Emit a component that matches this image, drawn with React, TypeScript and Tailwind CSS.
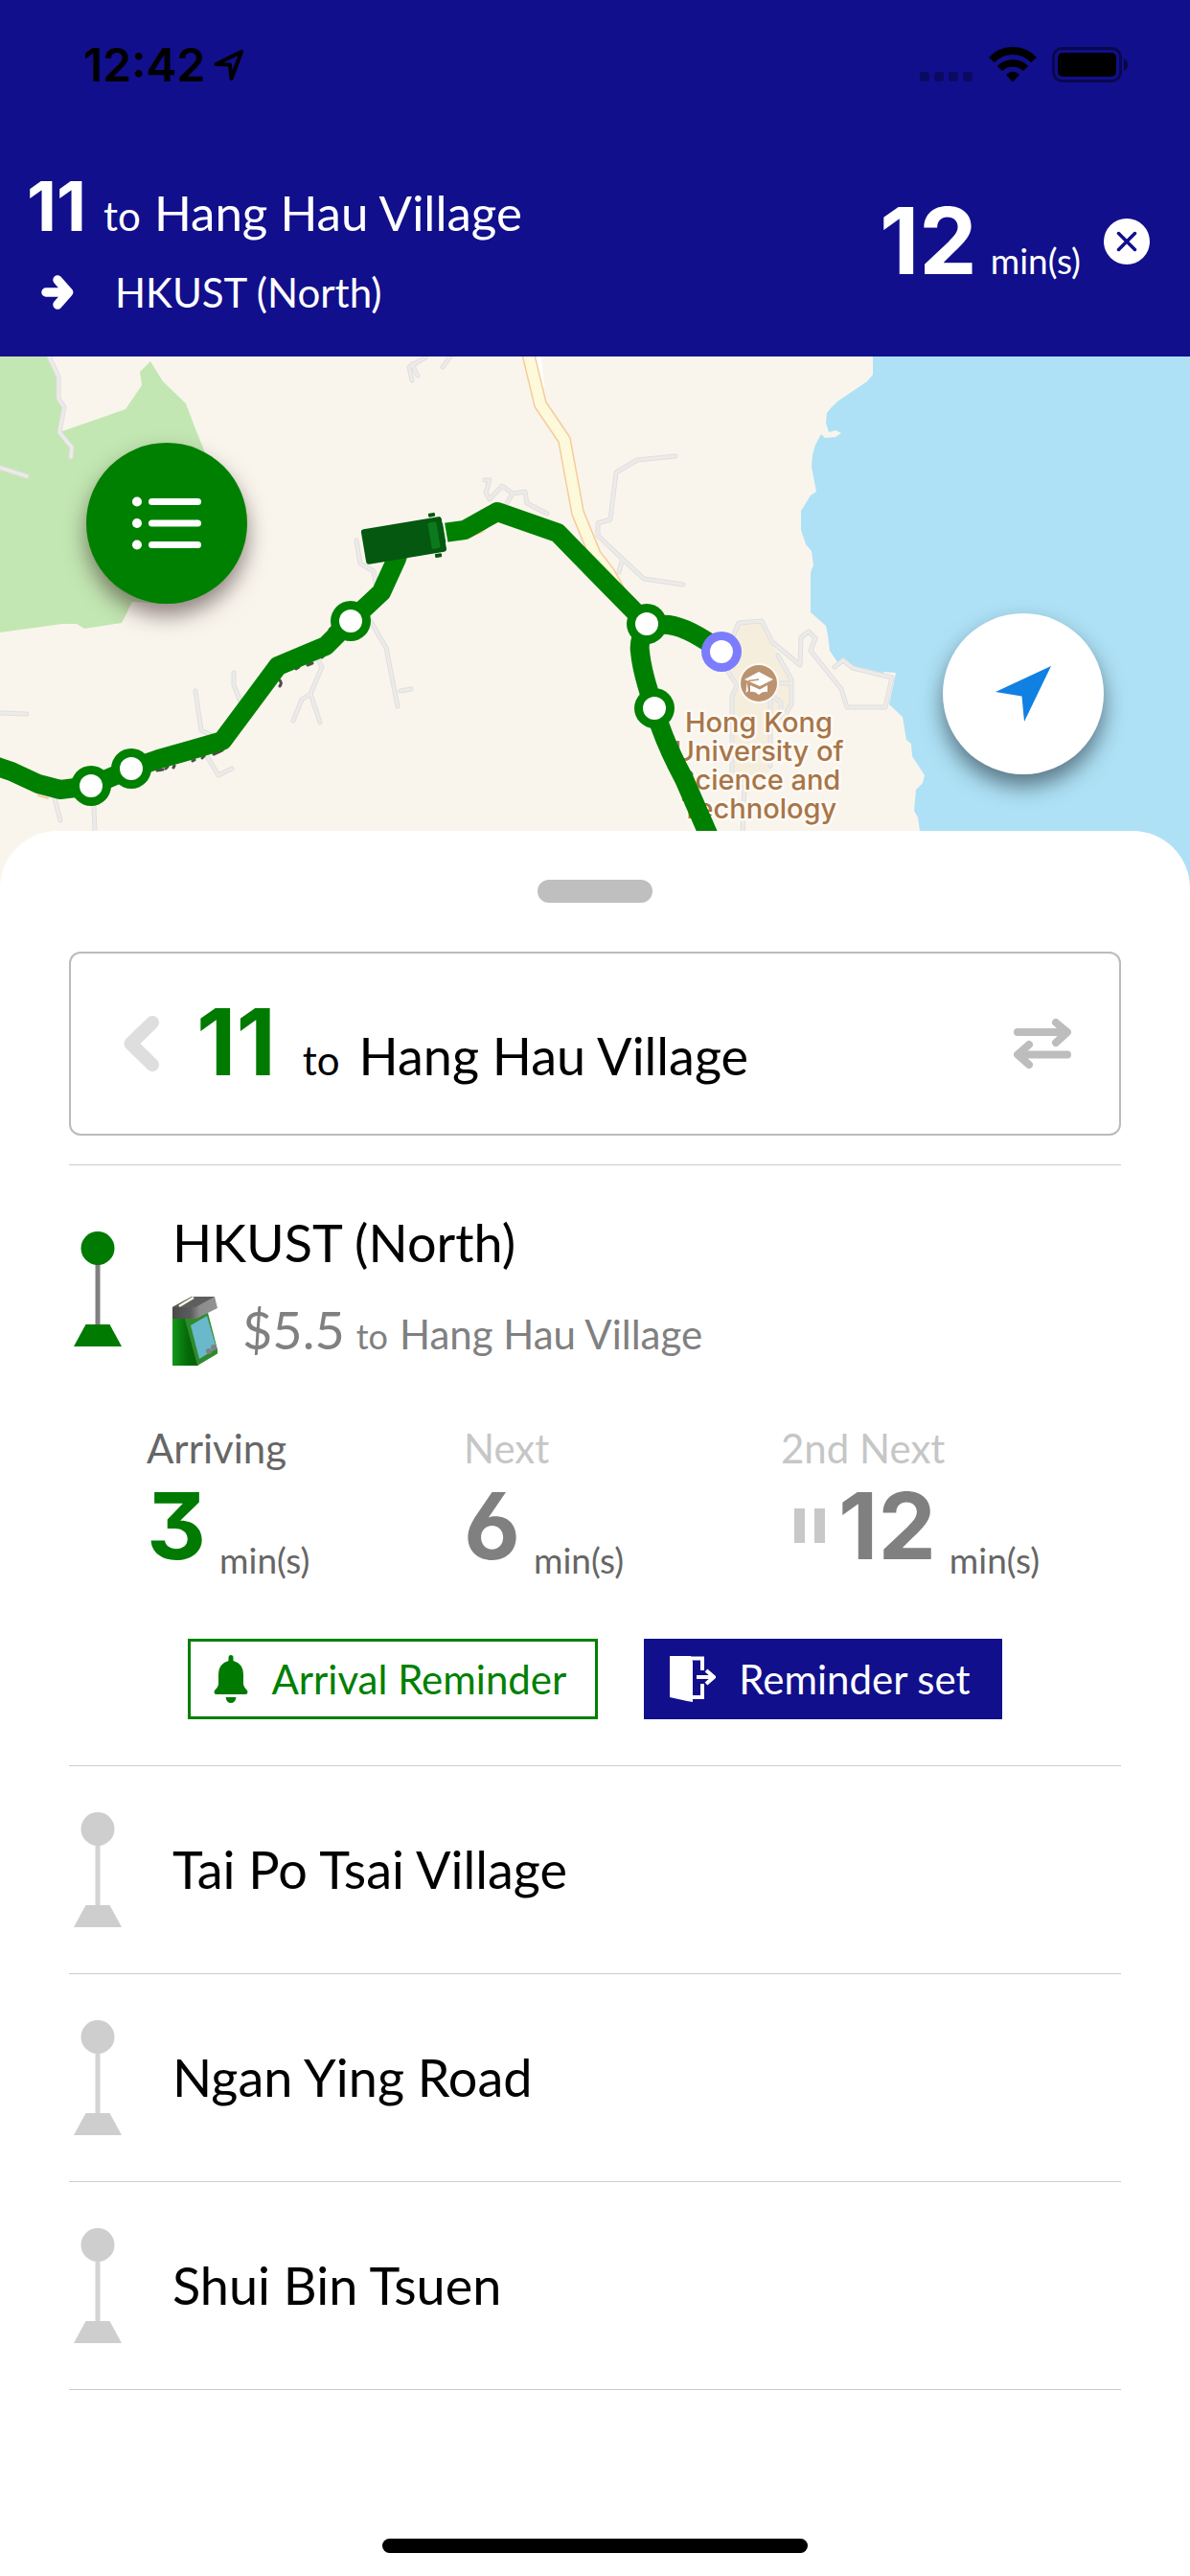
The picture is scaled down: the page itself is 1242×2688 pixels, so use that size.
import React from "react";

const NUM = "font-['Inter',sans-serif] font-bold [font-feature-settings:'cv09','cv03']";

function LocationArrow() {
  return (
    <svg viewBox="0 0 32 34" className="h-[34px] w-8" fill="none" stroke="black" strokeWidth="4" strokeLinejoin="round" aria-hidden="true">
      <path d="M29 3 2.500 16 17 16.500 18.500 31Z" />
    </svg>
  );
}

function StatusBar() {
  return (
    <div className="flex h-33 items-center justify-between pt-1 pr-16 pl-[87px] text-black">
      <div className="flex items-center gap-[9px]">
        <span className="font-['Inter',sans-serif] text-[48px] leading-none font-semibold">12:42</span>
        <LocationArrow />
      </div>
      <svg viewBox="0 0 218 38" className="h-[38px] w-[218px]" role="img" aria-label="Wi-Fi and battery">
        <g opacity="0.3">
          <rect x="0" y="26" width="10" height="10" rx="3" />
          <rect x="15" y="26" width="10" height="10" rx="3" />
          <rect x="30" y="26" width="10" height="10" rx="3" />
          <rect x="45" y="26" width="10" height="10" rx="3" />
        </g>
        <g fill="none" stroke="black">
          <path d="M75 13.500C87 .8 107 .8 119 13.500" strokeWidth="8" />
          <path d="M83.500 22.500C90.500 15 103.500 15 110.500 22.500" strokeWidth="7.500" />
        </g>
        <path d="M97 36.500 90 29Q97 22.500 104 29Z" />
        <rect x="139.500" y="1.500" width="70" height="34" rx="9" fill="none" stroke="black" strokeOpacity="0.45" strokeWidth="3" />
        <rect x="144" y="6" width="61" height="25" rx="5" />
        <path d="M213 12Q217 14 217 18.500T213 25Z" fillOpacity="0.5" />
      </svg>
    </div>
  );
}

function TripHeader() {
  return (
    <header className="bg-[#110f8c] text-white">
      <StatusBar />
      <div className="flex h-60 items-center justify-between pr-[42px] pl-7">
        <div className="flex flex-col gap-3.5 pt-2.5">
          <h1 className="flex items-baseline text-[51px] leading-[72px]">
            <span className={`${NUM} text-[72px]`}>11</span>
            <span className="ml-[18px] text-[42px]">to</span>
            <span className="ml-[14px]">Hang Hau Village</span>
          </h1>
          <p className="flex items-center gap-[43px] pl-[15px] text-[42px] leading-[60px]">
            <svg viewBox="0 0 34 36" className="h-9 w-[34px]" fill="none" stroke="white" strokeWidth="9.500" strokeLinecap="round" strokeLinejoin="round" aria-hidden="true">
              <path d="M5 18H27M17 5 28.500 18 17 31" />
            </svg>
            HKUST (North)
          </p>
        </div>
        <div className="flex items-center gap-6">
          <p className="flex items-baseline gap-[14px] pb-0.5">
            <span className={`${NUM} text-[96px] leading-24`}>12</span>
            <span className="text-[37px] leading-12">min(s)</span>
          </p>
          <button type="button" aria-label="Close" className="rounded-full">
            <svg viewBox="0 0 48 48" className="size-12">
              <circle cx="24" cy="24" r="24" fill="white" />
              <path d="M15.500 15.500 32.500 32.500M32.500 15.500 15.500 32.500" stroke="#110f8c" strokeWidth="3.500" strokeLinecap="round" />
            </svg>
          </button>
        </div>
      </div>
    </header>
  );
}

const minorRoads = [
  "M51 0 61 21 61 44 67 53 62 79 75 95 74 105",
  "M0 116 28 125",
  "M444 1 427 11 430 25M430 8 436 20M470 0 462 11",
  "M506 129 511 129 507 142 511 149 524 135 535 143 548 141 550 153 571 164M535 143 529 153",
  "M372 192 376 216 390 224 392 236",
  "M386 275 403 304 415 365M418 349 429 347",
  "M333 318 336 324 324 352 334 382M324 352 315 358 306 380",
  "M244 330 244 343 251 360M204 349 210 390 222 396M216 417 228 437 242 430",
  "M0 372 28 373M57 461 63 484M98 468 99 500",
  "M705 104 665 108 643 121 637 170 624 174 624 187 672 232 713 238M649 214 646 225",
  "M764 294 771 278 795 276 806 298 835 322 836 293 844 287 851 294 846 307 878 347 884 366 924 366 931 335 890 325 880 317 871 324",
  "M812 312 826 337 826 363 817 378M807 341 826 341M807 355 815 361 815 372",
  "M758 326 769 343 764 355 764 434 777 447 775 500M804 355 804 427",
];

const stops = [
  { x: 95, y: 448, color: "#008000" },
  { x: 137, y: 430, color: "#008000" },
  { x: 366, y: 276, color: "#008000" },
  { x: 675, y: 279, color: "#008000" },
  { x: 683, y: 367, color: "#008000" },
  { x: 753, y: 308, color: "#7c7cff" },
];

const campusLabel = ["Hong Kong", "University of", "Science and", "Technology"];

function RouteMap() {
  const roads = minorRoads.join("");
  return (
    <svg viewBox="0 0 1242 560" preserveAspectRatio="xMidYMin slice" className="h-[560px] w-full" role="img" aria-label="Route map">
      <rect width="1242" height="560" fill="#f9f5ed" />
      <path d="M0 0H51L61 21V44L67 53 62 79 131 55 148 30 146 16 157 5 170 26 194 49 203 73 213 98 198 198 174 258 138 256 127 278 88 284 80 279 65 279 0 288Z" fill="#c3e7b3" />
      <path
        d="M911 0V19L905 26 874 47 866 55 863 59 862 69 865 79 872 77 878 80 872 84 861 85 857 81 851 92 848 103 847 115 852 141 846 145 836 161 836 181 841 196 847 203 849 218 846 225V267L862 281 864 291 866 307 874 319 880 317 891 325 922 332 922 329 935 330 928 363 942 376 946 400 951 404 952 417 965 437 963 445 956 452 954 474 958 481 960 495V560H1242V0Z"
        fill="#aee1f5"
      />
      <path d="M771 278 795 276 806 298 813 312 826 337V363L819 377 805 384V430L781 457 766 435 764 355 771 341 758 320Z" fill="#f6eedd" />
      <g fill="none" strokeLinecap="round" strokeLinejoin="round">
        <path d={roads} stroke="#e0dfdd" strokeWidth="5" />
        <path d={roads} stroke="#ecebea" strokeWidth="3" />
        <path d="M562 0 565 30" stroke="white" strokeWidth="6" />
        <path d="M551 -4 564 50 589 87 603 163 621 207 635 225 650 252" stroke="#f7cb9b" strokeWidth="14" />
        <path d="M551 -4 564 50 589 87 603 163 621 207 635 225 650 252" stroke="#fcfadb" strokeWidth="11" />
        <path d="M485 190 503 183 512 174M40 458 50 461" stroke="#f7cb9b" strokeWidth="2" />
      </g>
      <g stroke="#4d4d4d" strokeWidth="3" strokeLinecap="round" fill="none">
        <path d="M164 432 170 431M173 430 175 428M181 429 182 427M201 422 203 421M211 419 213 417M223 415 228 413 232 411M291 337Q295 340 292 344M309 326 312 324M321 322 326 320M336 314 339 311M344 285 347 282" />
      </g>
      <g fill="#a87547" stroke="#fdfaf5" strokeWidth="5" paintOrder="stroke" strokeLinejoin="round" textAnchor="middle" className="font-['Inter',sans-serif] text-[29px] font-medium">
        {campusLabel.map((line, i) => (
          <text key={line} x="792" y={392 + i * 30}>
            {line}
          </text>
        ))}
      </g>
      <circle cx="792" cy="341" r="21" fill="#fdfaf5" />
      <circle cx="792" cy="341" r="19" fill="#bb9370" />
      <path d="M777 337 792 329 807 337 793 344Z" fill="white" />
      <path d="M783 343 793 347.500 801 343V350Q796 349 792 353 788 349 783 350Z" fill="white" />
      <path d="M781 338.500 792 337" stroke="#bb9370" strokeWidth="1.500" fill="none" />
      <path d="M779.500 340 778.500 351 781 349Z" fill="white" />
      <g fill="none" stroke="#008000" strokeWidth="20" strokeLinejoin="round">
        <path d="M-10 425 0 429 12 433 40 446 63 452 95 448 137 430 166 420 198 411 232 401 290 323 340 302 366 276 398 246 414 211 420 192 463 184 485 181 519 162 582 184 621 224 675 279 698 280Q720 283 753 308" />
        <path d="M675 279Q666 297 668 308 670 330 683 367 692 400 714 441L742 505" />
      </g>
      {stops.map((s) => (
        <g key={`${s.x}-${s.y}`}>
          <circle cx={s.x} cy={s.y} r="21" fill={s.color} />
          <circle cx={s.x} cy={s.y} r="12" fill="white" />
        </g>
      ))}
      <g transform="translate(421 192) rotate(-9.500)">
        <rect x="-42" y="-18.500" width="85" height="37" rx="3" fill="#04580f" />
        <path d="M44.500 -14V14" stroke="white" strokeWidth="2" />
        <rect x="28" y="-14" width="9" height="28" rx="2" fill="#0b7a1c" />
        <rect x="30" y="-23.500" width="7" height="4" rx="1" fill="#04580f" />
        <rect x="30" y="19.500" width="7" height="4" rx="1" fill="#04580f" />
      </g>
    </svg>
  );
}

function MapSection() {
  return (
    <section className="relative">
      <RouteMap />
      <button type="button" aria-label="Route list" className="absolute top-[90px] left-[90px] flex size-[168px] items-center justify-center rounded-full bg-[#008000] shadow-[0_12px_22px_rgba(40,20,20,0.5)]">
        <svg viewBox="0 0 72 56" className="h-14 w-18" stroke="white" strokeWidth="7" strokeLinecap="round">
          <path d="M20.500 5.500H68.500M20.500 28H68.500M20.500 50.500H68.500" />
          <g fill="white" stroke="none">
            <circle cx="5" cy="5.500" r="5" />
            <circle cx="5" cy="28" r="5" />
            <circle cx="5" cy="50.500" r="5" />
          </g>
        </svg>
      </button>
      <button type="button" aria-label="My location" className="absolute top-[268px] right-[90px] flex size-[168px] items-center justify-center rounded-full bg-white shadow-[0_12px_22px_rgba(20,30,40,0.55)]">
        <svg viewBox="0 0 58 58" className="size-[58px]" fill="#1080e2">
          <path d="M58 0 0 27 27.500 31.500 30 58Z" />
        </svg>
      </button>
    </section>
  );
}

function StopSign({ active = false }: { active?: boolean }) {
  const main = active ? "#007a00" : "#cecece";
  return (
    <svg viewBox="0 0 50 120" className="h-30 w-[50px] shrink-0" aria-hidden="true">
      <path d="M25 30V100" stroke={active ? "#808080" : "#d3d3d3"} strokeWidth="5" />
      <circle cx="25" cy="17.500" r="17.500" fill={main} />
      <path d="M12.500 97H37.500L50 120H0Z" fill={main} />
    </svg>
  );
}

function FareBox() {
  return (
    <svg viewBox="0 0 47 72" className="h-18 w-[47px]" aria-hidden="true">
      <defs>
        <linearGradient id="side" x1="0" x2="1">
          <stop offset="0" stopColor="#12971a" />
          <stop offset="0.6" stopColor="#046808" />
          <stop offset="1" stopColor="#055f09" />
        </linearGradient>
        <linearGradient id="lid" x1="0" x2="1">
          <stop offset="0" stopColor="#4a4a4a" />
          <stop offset="0.4" stopColor="#5c5c5c" />
          <stop offset="0.6" stopColor="#8c8c8c" />
          <stop offset="1" stopColor="#939393" />
        </linearGradient>
      </defs>
      <path d="M0 20H14L27 72H0Z" fill="url(#side)" />
      <path d="M12 20 37 17 48 59 26 72Z" fill="#2f8a2c" />
      <path d="M19 30 36 20 46 54 28 65Z" fill="#69b9ca" />
      <g fill="#7d8084">
        <circle cx="38" cy="57" r="3" />
        <circle cx="43" cy="53" r="3" />
      </g>
      <path d="M0 11 20 0H44L47 12 25 23H0Z" fill="url(#lid)" />
      <path d="M0 11 20 0H44L24 11Z" fill="#5e5e5e" />
      <path d="M7 10 22 1" stroke="#fffbe6" strokeWidth="2.500" />
    </svg>
  );
}

function Bell() {
  return (
    <svg viewBox="0 0 36 50" className="h-[50px] w-9" fill="#007a00" aria-hidden="true">
      <path d="M18 0Q20.500 0 20.500 3V6Q31 9 31 20V30Q31 33 35 37 36.500 41 33 41H3Q-.5 41 1 37 5 33 5 30V20Q5 9 15.500 6V3Q15.500 0 18 0ZM12.500 44H23.500Q22.500 50 18 50T12.500 44Z" />
    </svg>
  );
}

function ExitDoor() {
  return (
    <svg viewBox="0 0 48 48" className="size-12" aria-hidden="true">
      <path d="M0 0H22L24 6V48L18 47 0 43Z" fill="white" />
      <path d="M20 2.500H34V15M34 29V43H24" fill="none" stroke="white" strokeWidth="4" />
      <path d="M28 22H45M38 15 46 22 38 29" fill="none" stroke="white" strokeWidth="4" />
    </svg>
  );
}

const arrivals = [
  { label: "Arriving", labelColor: "text-[#666666]", minutes: "3", color: "text-[#007a00]", held: false },
  { label: "Next", labelColor: "text-[#c6c6c6]", minutes: "6", color: "text-[#808080]", held: false },
  { label: "2nd Next", labelColor: "text-[#c6c6c6]", minutes: "12", color: "text-[#808080]", held: true },
];

function Arrivals() {
  return (
    <dl className="mt-[59px] grid grid-cols-3 pr-6 pl-[81px]">
      {arrivals.map((a) => (
        <div key={a.label}>
          <dt className={`text-[42px] leading-[54px] ${a.labelColor}`}>{a.label}</dt>
          <dd className="flex items-end gap-[14px]">
            <span className="flex items-center gap-[14px]">
              {a.held && (
                <span className="flex gap-[10px] pl-[14px]" aria-hidden="true">
                  <span className="h-9 w-[11px] bg-[#c8c8c8]" />
                  <span className="h-9 w-[11px] bg-[#c8c8c8]" />
                </span>
              )}
              <span className={`${NUM} text-[96px] leading-[108px] ${a.color}`}>{a.minutes}</span>
            </span>
            <span className="text-[37px] leading-9 text-[#666666]">min(s)</span>
          </dd>
        </div>
      ))}
    </dl>
  );
}

const actionClass = "flex h-21 items-center gap-6 border-[3px] pr-[30px] pl-6 text-[42px] leading-none";

function ActiveStop() {
  return (
    <li className="border-t border-[#cccccc] pt-[49px] pb-12">
      <div className="flex gap-[53px] pl-[5px]">
        <div className="pt-5">
          <StopSign active />
        </div>
        <div>
          <h3 className="text-[54px] leading-16 text-black">HKUST (North)</h3>
          <div className="mt-6 flex h-18 items-center gap-[26px] text-[#808080]">
            <FareBox />
            <p className="flex items-baseline gap-3 pt-1 text-[42px] leading-16">
              <span className="text-[54px]">$5.5</span>
              <span className="text-[36px]">to</span>
              <span>Hang Hau Village</span>
            </p>
          </div>
        </div>
      </div>
      <Arrivals />
      <div className="mt-16 flex justify-center gap-12">
        <button type="button" className={`${actionClass} border-[#008000] text-[#008000]`}>
          <Bell />
          Arrival Reminder
        </button>
        <button type="button" className={`${actionClass} border-[#110f8c] bg-[#110f8c] text-white`}>
          <ExitDoor />
          Reminder set
        </button>
      </div>
    </li>
  );
}

const otherStops = ["Tai Po Tsai Village", "Ngan Ying Road", "Shui Bin Tsuen"];

function RouteSheet() {
  return (
    <main className="relative -mt-[65px] flex grow flex-col rounded-t-[60px] bg-white pt-[51px]">
      <div className="mx-auto h-6 w-30 rounded-full bg-[#bfbfbf]" />
      <div className="mx-18 mt-[51px] flex h-48 items-center rounded-xl border-2 border-[#bbbbbb] pr-[50px] pl-[54px]">
        <button type="button" aria-label="Back">
          <svg viewBox="0 0 39 60" className="h-15 w-[39px]" fill="none" stroke="#dedede" strokeWidth="14" strokeLinecap="round" strokeLinejoin="round">
            <path d="M31 8 8.500 30 31 52" />
          </svg>
        </button>
        <h2 className="ml-[38px] flex grow items-baseline pb-0.5 text-[54px] leading-16 text-black">
          <span className={`${NUM} text-[96px] leading-24 text-[#007a00]`}>11</span>
          <span className="ml-7 text-[42px]">to</span>
          <span className="ml-5">Hang Hau Village</span>
        </h2>
        <button type="button" aria-label="Swap direction">
          <svg viewBox="0 0 60 52" className="h-[52px] w-15" fill="none" stroke="#bdbdbd" strokeWidth="8" strokeLinecap="round" strokeLinejoin="round">
            <path d="M4 14H55M44 4 56 14 44 25M56 37.500H5M16 27 4 37.500 16 48" />
          </svg>
        </button>
      </div>
      <ul className="mx-18 mt-[30px] border-b border-[#cccccc]">
        <ActiveStop />
        {otherStops.map((name) => (
          <li key={name} className="flex h-[217px] items-center gap-[53px] border-t border-[#cccccc] pl-[5px] text-[54px] leading-16 text-black">
            <StopSign />
            {name}
          </li>
        ))}
      </ul>
      <div className="mx-auto mt-auto mb-6 h-[15px] w-[444px] rounded-full bg-black" />
    </main>
  );
}

export default function App() {
  return (
    <div className="flex min-h-screen flex-col bg-white font-['Lato',sans-serif]">
      <TripHeader />
      <MapSection />
      <RouteSheet />
    </div>
  );
}
